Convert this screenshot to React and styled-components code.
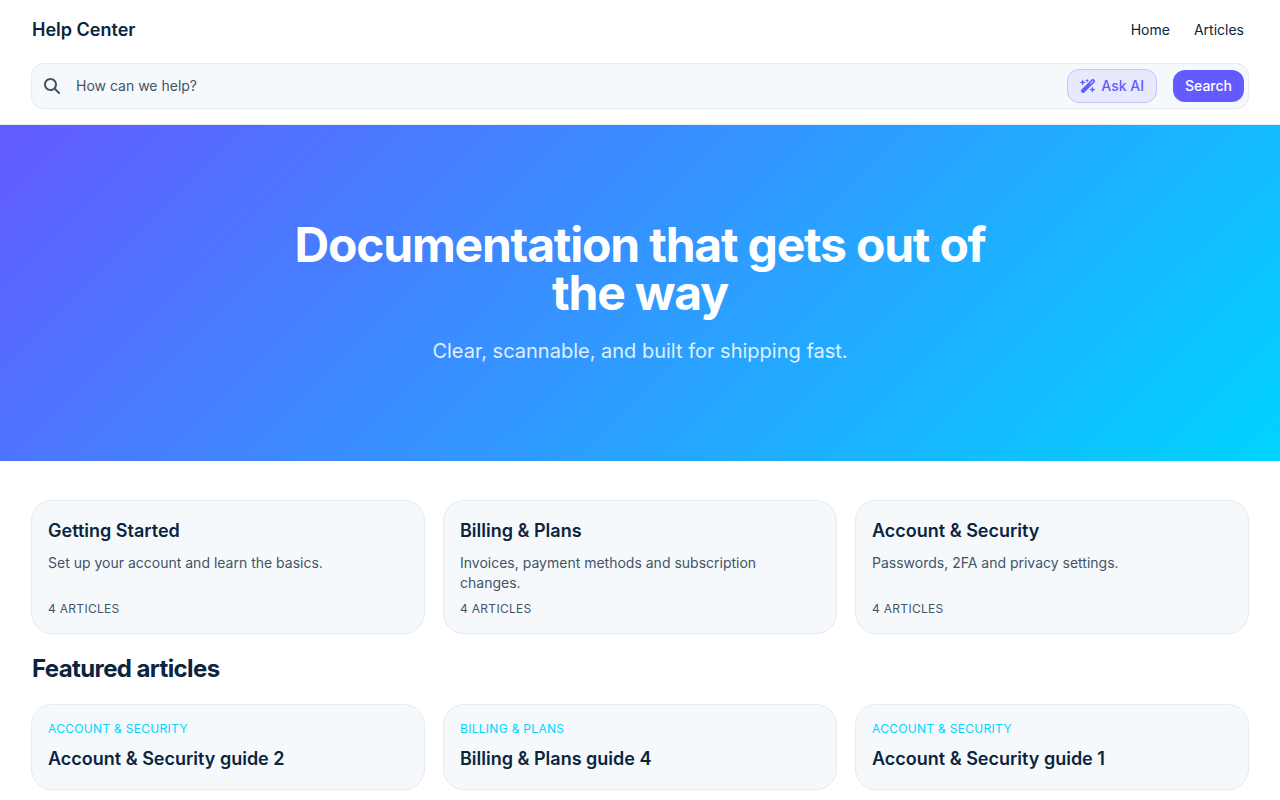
import React from "react";
import styled, { createGlobalStyle } from "styled-components";
import { FaMagnifyingGlass, FaWandMagicSparkles } from "react-icons/fa6";

const GlobalStyle = createGlobalStyle`
  *, *::before, *::after { box-sizing: border-box; }
  body {
    margin: 0;
    background: #ffffff;
    color: #0a2540;
    font-family: Inter, "Liberation Sans", sans-serif;
    font-size: 14px;
    line-height: 20px;
    -webkit-font-smoothing: antialiased;
  }
  h1, h2, h3, p { margin: 0; }
  a { color: inherit; text-decoration: none; }
  button, input { font: inherit; letter-spacing: inherit; }
`;

const Header = styled.header`
  padding: 0 32px 16px;
  border-bottom: 1px solid #e6ebf1;
`;

const TopRow = styled.div`
  display: flex;
  align-items: center;
  justify-content: space-between;
  padding: 16px 4px 20px 0;
`;

const Brand = styled.a`
  font-size: 18px;
  line-height: 28px;
  font-weight: 600;
`;

const Nav = styled.nav`
  display: flex;
  gap: 24px;
`;

const SearchForm = styled.form`
  display: flex;
  align-items: center;
  height: 44px;
  padding: 0 4px 0 12px;
  border-radius: 12px;
  background: #f6f9fc;
  box-shadow: 0 0 0 1px #e6ebf1;
  color: #425466;
`;

const SearchInput = styled.input`
  flex: 1;
  min-width: 0;
  padding: 0 16px;
  border: 0;
  outline: 0;
  background: transparent;
  color: #0a2540;
  &::placeholder { color: #425466; opacity: 1; }
`;

const Actions = styled.div`
  display: flex;
  align-items: center;
  gap: 16px;
`;

const Button = styled.button`
  display: inline-flex;
  align-items: center;
  gap: 5px;
  padding: 6px 12px;
  border: ${(p) => (p.$soft ? "1px solid #c5c2fd" : "0")};
  border-radius: 12px;
  font-weight: 500;
  cursor: pointer;
  color: ${(p) => (p.$soft ? "#635bff" : "#ffffff")};
  background: ${(p) => (p.$soft ? "#e7e9fc" : "#635bff")};
`;

const Hero = styled.section`
  padding: 96px 32px;
  text-align: center;
  color: #ffffff;
  background: linear-gradient(135deg, #635bff 0%, #00d4ff 100%);
`;

const HeroTitle = styled.h1`
  max-width: 768px;
  margin: 0 auto 20px;
  font-size: 48px;
  line-height: 48px;
  font-weight: 700;
  letter-spacing: -0.025em;
`;

const HeroText = styled.p`
  font-size: 20px;
  line-height: 28px;
  opacity: 0.85;
`;

const Main = styled.main`
  display: flex;
  flex-direction: column;
  gap: 20px;
  padding: 40px 32px;
`;

const Grid = styled.div`
  display: grid;
  grid-template-columns: repeat(3, minmax(0, 1fr));
  gap: 20px;
`;

const Card = styled.a`
  display: flex;
  flex-direction: column;
  gap: 8px;
  padding: 16px;
  border-radius: 20px;
  background: #f6f9fc;
  box-shadow: 0 0 0 1px #e6ebf1;
`;

const CardTitle = styled.h3`
  font-size: 18px;
  line-height: 28px;
  font-weight: 600;
`;

const CardText = styled.p`
  flex: 1;
  color: #425466;
`;

const Label = styled.p`
  font-size: 12px;
  line-height: 16px;
  letter-spacing: 0.025em;
  text-transform: uppercase;
  color: ${(p) => (p.$accent ? "#00d4ff" : "#425466")};
`;

const SectionTitle = styled.h2`
  font-size: 24px;
  line-height: 32px;
  font-weight: 700;
  letter-spacing: -0.025em;
`;

const categories = [
  { title: "Getting Started", text: "Set up your account and learn the basics.", count: 4 },
  { title: "Billing & Plans", text: "Invoices, payment methods and subscription changes.", count: 4 },
  { title: "Account & Security", text: "Passwords, 2FA and privacy settings.", count: 4 },
];

const featured = [
  { category: "Account & Security", title: "Account & Security guide 2" },
  { category: "Billing & Plans", title: "Billing & Plans guide 4" },
  { category: "Account & Security", title: "Account & Security guide 1" },
];

export default function App() {
  return (
    <>
      <GlobalStyle />
      <Header>
        <TopRow>
          <Brand href="#">Help Center</Brand>
          <Nav>
            <a href="#home">Home</a>
            <a href="#articles">Articles</a>
          </Nav>
        </TopRow>
        <SearchForm role="search" onSubmit={(e) => e.preventDefault()}>
          <FaMagnifyingGlass size={16} aria-hidden="true" />
          <SearchInput type="text" aria-label="How can we help?" placeholder="How can we help?" />
          <Actions>
            <Button type="button" $soft>
              <FaWandMagicSparkles size={16} aria-hidden="true" />
              Ask AI
            </Button>
            <Button type="submit">Search</Button>
          </Actions>
        </SearchForm>
      </Header>
      <Hero>
        <HeroTitle>Documentation that gets out of the way</HeroTitle>
        <HeroText>Clear, scannable, and built for shipping fast.</HeroText>
      </Hero>
      <Main>
        <Grid>
          {categories.map((c) => (
            <Card href="#category" key={c.title}>
              <CardTitle>{c.title}</CardTitle>
              <CardText>{c.text}</CardText>
              <Label>{c.count} articles</Label>
            </Card>
          ))}
        </Grid>
        <SectionTitle>Featured articles</SectionTitle>
        <Grid>
          {featured.map((f) => (
            <Card href="#article" key={f.title}>
              <Label $accent>{f.category}</Label>
              <CardTitle>{f.title}</CardTitle>
            </Card>
          ))}
        </Grid>
      </Main>
    </>
  );
}
